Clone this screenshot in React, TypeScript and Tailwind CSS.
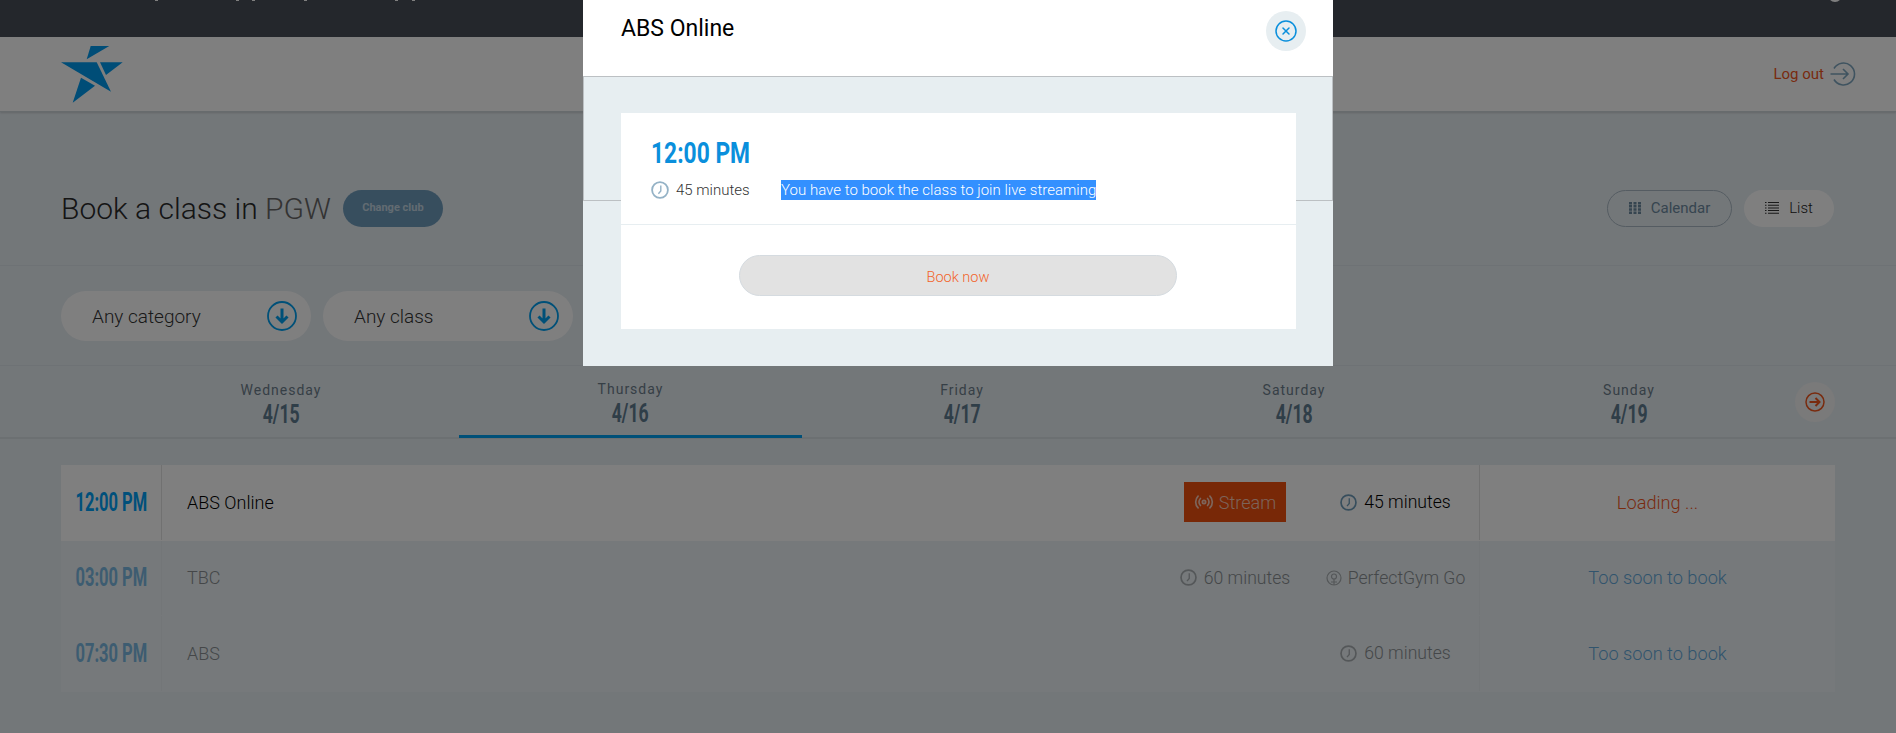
import { CircleX, Radio } from "lucide-react";

const font = "font-['Roboto',sans-serif]";

function Clock({ className }: { className: string }) {
  return (
    <svg viewBox="0 0 18 18" fill="none" stroke="currentColor" className={className}>
      <circle cx="9" cy="9" r="7.9" strokeWidth="1.8" />
      <path d="M9.8 4.4V10L7.4 12.8" strokeWidth="1.4" />
    </svg>
  );
}

function CircleDown() {
  return (
    <svg viewBox="0 0 30 30" fill="none" className="h-[30px] w-[30px] text-[#00a0f0]" stroke="currentColor">
      <circle cx="15" cy="15" r="14" strokeWidth="1.8" />
      <path d="M15 7.5V21M9.5 15.5L15 21L20.5 15.5" strokeWidth="3" />
    </svg>
  );
}

function Filter({ label }: { label: string }) {
  return (
    <div className="flex h-[50px] w-[250px] items-center justify-between rounded-[25px] bg-white pl-[31px] pr-[14px] text-[19px] font-light text-[#333]">
      <span className="pt-[2px]">{label}</span>
      <CircleDown />
    </div>
  );
}

function Day({ name, date, active, width }: { name: string; date: string; active?: boolean; width: string }) {
  return (
    <div className={`flex h-[72px] flex-col items-center pt-[16px] ${width} ${active ? "border-b-[3px] border-[#00a0f0]" : ""}`}>
      <span className={`text-[14px] leading-[16px] tracking-[1px] text-[#6d7f8c] ${active ? "-mt-[1px]" : ""}`}>{name}</span>
      <span className="mt-[1px] inline-block origin-center scale-x-[0.68] text-[26px] font-bold leading-[30px] text-[#5f7c90]">{date}</span>
    </div>
  );
}

function Duration({ text, tone }: { text: string; tone: string }) {
  return (
    <span className="flex items-center gap-[7px]">
      <Clock className={`h-[17px] w-[17px] ${tone}`} />
      {text}
    </span>
  );
}

function ClassRow({
  time,
  name,
  colA,
  colB,
  action,
  highlight,
}: {
  time: string;
  name: string;
  colA?: React.ReactNode;
  colB: React.ReactNode;
  action: string;
  highlight?: boolean;
}) {
  return (
    <div className={`flex h-[75.5px] items-stretch pb-[1px] ${highlight ? "bg-white text-black" : "bg-[#ecf3f6] text-[#8a8f93]"}`}>
      <div className={`flex w-[101px] items-center justify-center border-r ${highlight ? "border-[#e3e3e3]" : "border-[#e6edf0]"}`}>
        <span className={`inline-block scale-x-[0.66] whitespace-nowrap text-[25px] font-bold ${highlight ? "text-[#00a0f6]" : "text-[#7ab9e2]"}`}>{time}</span>
      </div>
      <div className="flex flex-1 items-center pl-[25px] text-[18px] font-light">{name}</div>
      <div className="flex w-[130px] items-center justify-center text-[17.6px] font-light">{colA}</div>
      <div className="ml-[12px] flex w-[167px] items-center justify-center text-[17.6px] font-light">{colB}</div>
      <div className={`flex w-[356px] items-center justify-center border-l text-[18.2px] font-light ${highlight ? "border-[#e3e3e3] text-[#f2561d]" : "border-[#e6edf0] text-[#62a8da]"}`}>
        {action}
      </div>
    </div>
  );
}

function Page() {
  return (
    <div className="h-[733px] bg-[#e7eef3]">
      {/* top bar, only the descenders of its text are in view */}
      <div className="relative h-[37px] overflow-hidden bg-[#484f59]">
        <div className="absolute left-[155px] top-0 h-[1px] w-[3px] bg-white" />
        <div className="absolute left-[236px] top-0 h-[1px] w-[3px] bg-white" />
        <div className="absolute left-[252px] top-0 h-[1px] w-[3px] bg-white" />
        <div className="absolute left-[304px] top-0 h-[1px] w-[3px] bg-white" />
        <div className="absolute left-[395px] top-0 h-[1px] w-[3px] bg-white" />
        <div className="absolute left-[412px] top-0 h-[1px] w-[3px] bg-white" />
        <div className="absolute left-[1828px] top-[-12px] h-[14px] w-[14px] rounded-full bg-white" />
      </div>

      <header className="flex h-[75px] items-center justify-between border-b border-[#cfd6db] bg-white pl-[61px] pr-[40px] shadow-[0_1px_2px_rgba(0,0,0,0.15)]">
        <svg viewBox="0 0 62 57" className="h-[57px] w-[62px] fill-[#009aee]">
          <polygon points="48.3,0 29.7,0 25.7,13.3" />
          <polygon points="0,16.3 35.7,16.3 50,45.8" />
          <polygon points="39,16.3 61.7,16.3 45,29" />
          <polygon points="20,31.7 34,39.7 11.7,56.7" />
        </svg>
        <div className="flex items-center gap-[6px] text-[15px] text-[#f2561d]">
          <span>Log out</span>
          <svg viewBox="0 0 26 24" fill="none" className="h-[24px] w-[26px] text-[#7fa7c0]" stroke="currentColor" strokeWidth="1.6">
            <path d="M4 6.5A11 11 0 1 1 4 17.5" />
            <path d="M0.5 12H18M13 7L18 12L13 17" />
          </svg>
        </div>
      </header>

      <section className="flex h-[154px] items-center justify-between border-b border-[#dde5ea] pl-[61px] pr-[62px] pt-[39px]">
        <div className="flex items-center gap-[12px]">
          <h1 className="text-[30px] font-light leading-[37px] text-[#2a2a2a]">
            Book a class in <span className="text-[#666]">PGW</span>
          </h1>
          <button className="h-[37px] w-[100px] rounded-[19px] bg-[#6f9dbd] text-[11px] font-bold text-white/60">Change club</button>
        </div>
        <div className="flex items-center gap-[12px]">
          <div className="flex h-[37px] w-[125px] items-center justify-center gap-[10px] rounded-[19px] border border-[#aab9c4] text-[15px] text-[#6d8aa0]">
            <svg viewBox="0 0 12 12" className="h-[12px] w-[12px] fill-[#6d8aa0]">
              <path d="M0 0h3v2.5H0zM4.5 0h3v2.5h-3zM9 0h3v2.5H9zM0 3h3v2.5H0zM4.5 3h3v2.5h-3zM9 3h3v2.5H9zM0 6.3h3v2.5H0zM4.5 6.3h3v2.5h-3zM9 6.3h3v2.5H9zM0 9.5h3V12H0zM4.5 9.5h3V12h-3zM9 9.5h3V12H9z" />
            </svg>
            Calendar
          </div>
          <div className="flex h-[37px] w-[90px] items-center justify-center gap-[10px] rounded-[19px] bg-white text-[15px] font-light text-[#222]">
            <svg viewBox="0 0 14 12" className="h-[12px] w-[14px] fill-[#333]">
              <path d="M0 0h1.5v1H0zM3 0h11v1H3zM0 2.7h1.5v1H0zM3 2.7h11v1H3zM0 5.4h1.5v1H0zM3 5.4h11v1H3zM0 8.1h1.5v1H0zM3 8.1h11v1H3zM0 10.8h1.5v1H0zM3 10.8h11v1H3z" />
            </svg>
            List
          </div>
        </div>
      </section>

      <section className="flex h-[100px] gap-[12px] border-b border-[#dde5ea] pl-[61px] pt-[25px]">
        <Filter label="Any category" />
        <Filter label="Any class" />
      </section>

      <nav className="flex h-[73px] items-start border-b-2 border-[#d8e0e5] pl-[103px]">
        <Day name="Wednesday" date="4/15" width="w-[356px]" />
        <Day name="Thursday" date="4/16" active width="w-[343px]" />
        <Day name="Friday" date="4/17" width="w-[320px]" />
        <Day name="Saturday" date="4/18" width="w-[344px]" />
        <Day name="Sunday" date="4/19" width="w-[326px]" />
        <button className="ml-[3px] mt-[16px] flex h-[40px] w-[40px] items-center justify-center rounded-full bg-[#f4f4f4]">
          <svg viewBox="0 0 20 20" fill="none" stroke="#f2561d" className="h-[20px] w-[20px]">
            <circle cx="10" cy="10" r="9" strokeWidth="1.5" />
            <path d="M4.5 10H14.5M10.5 6L14.5 10L10.5 14" strokeWidth="2" />
          </svg>
        </button>
      </nav>

      <div className="mx-[61px] mt-[26px]">
        <ClassRow
          highlight
          time="12:00 PM"
          name="ABS Online"
          colA={
            <span className="flex h-[40px] w-[102px] items-center justify-center gap-[5px] bg-[#f0500f] text-[18px] text-white/70">
              <Radio size={20} strokeWidth={2} />
              Stream
            </span>
          }
          colB={<Duration text="45 minutes" tone="text-[#6f9cba]" />}
          action="Loading ..."
        />
        <ClassRow
          time="03:00 PM"
          name="TBC"
          colA={<Duration text="60 minutes" tone="text-[#a9aeb2]" />}
          colB={
            <span className="flex items-center gap-[6px]">
              <svg viewBox="0 0 16 16" fill="none" stroke="#a9aeb2" strokeWidth="1.2" className="h-[16px] w-[16px]">
                <circle cx="8" cy="8" r="7" />
                <circle cx="8" cy="6.5" r="2.5" />
                <path d="M8 9v6M5 12h6" />
              </svg>
              PerfectGym Go
            </span>
          }
          action="Too soon to book"
        />
        <ClassRow
          time="07:30 PM"
          name="ABS"
          colB={<Duration text="60 minutes" tone="text-[#a9aeb2]" />}
          action="Too soon to book"
        />
      </div>
    </div>
  );
}

export default function App() {
  return (
    <div className={`relative h-[733px] overflow-hidden ${font}`}>
      <Page />
      <div className="absolute inset-0 bg-black/50" />

      {/* booking dialog */}
      <div className="absolute left-[583px] top-0 w-[750px]">
        <div className="flex h-[76px] items-start justify-between bg-white pl-[38px] pr-[27px]">
          <h2 className="mt-[15px] text-[23px] leading-[28px] text-black">ABS Online</h2>
          <button className="mt-[11px] flex h-[40px] w-[40px] items-center justify-center rounded-full bg-[#e7eef1]">
            <CircleX size={24} strokeWidth={1.5} className="text-[#0a8fdc]" />
          </button>
        </div>
        <div className="relative h-[290px] bg-[#e7eef1] pl-[38px] pr-[37px] pt-[37px]">
          <div className="absolute inset-x-0 top-0 h-[125px] border border-[#bcc0c3]" />
          <div className="relative h-[216px] bg-white">
            <div className="h-[112px] border-b border-[#e7eef1] pl-[30px] pt-[22px]">
              <div className="origin-left scale-x-[0.76] whitespace-nowrap text-[30px] font-bold leading-[36px] text-[#0a8fdc]">12:00 PM</div>
              <div className="mt-[8px] flex items-center text-[15px] font-light text-[#333]">
                <Clock className="h-[18px] w-[18px] text-[#94b2c6]" />
                <span className="ml-[7px] w-[105px]">45 minutes</span>
                <span className="bg-[#3390ff] leading-[20px] tracking-[0.02px] text-white">You have to book the class to join live streaming</span>
              </div>
            </div>
            <div className="flex justify-center pr-[1px] pt-[30px]">
              <button className="h-[41px] w-[438px] rounded-[21px] border border-[#d5dbe0] bg-[#e2e2e2] pt-[4px] text-[14.5px] font-light text-[#f2642a]">Book now</button>
            </div>
          </div>
        </div>
      </div>
    </div>
  );
}
